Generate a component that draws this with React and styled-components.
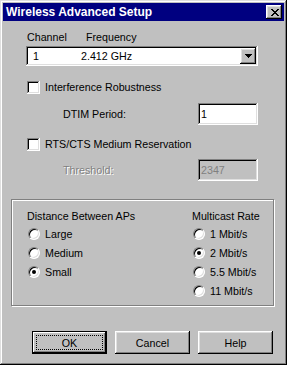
import React from "react"
import styled, { createGlobalStyle, css } from "styled-components"

// Win98 style dialog: "Wireless Advanced Setup"
const GlobalStyle = createGlobalStyle`
  html, body {
    margin: 0;
    padding: 0;
    background: #c0c0c0;
  }
  body {
    font-family: "Liberation Sans", Arial, sans-serif;
    font-size: 10.7px;
    color: #000;
  }
`

const raised = css`
  box-shadow: inset -1px -1px #000, inset 1px 1px #fff, inset -2px -2px #808080, inset 2px 2px #dfdfdf;
`

const sunken = css`
  box-shadow: inset -1px -1px #fff, inset 1px 1px #808080, inset -2px -2px #dfdfdf, inset 2px 2px #000;
`

const Window = styled.div`
  width: 287px;
  height: 365px;
  box-sizing: border-box;
  padding: 3px;
  background: #c0c0c0;
  box-shadow: inset -1px -1px #000, inset 1px 1px #dfdfdf, inset -2px -2px #808080, inset 2px 2px #fff;
  display: flex;
  flex-direction: column;
`

const TitleBar = styled.div`
  height: 18px;
  background: #000080;
  display: flex;
  align-items: center;
  justify-content: space-between;
  padding: 0 2px 0 3px;
`

const Title = styled.span`
  color: #fff;
  font-weight: bold;
  font-size: 12px;
  line-height: 18px;
`

const CloseButton = styled.button`
  width: 16px;
  height: 14px;
  padding: 0 0 0 1px;
  border: none;
  background: #c0c0c0;
  ${raised};
  display: flex;
  align-items: center;
  justify-content: center;
`

const Body = styled.div`
  padding: 0 26px 0 23px;
  display: flex;
  flex-direction: column;
`

const LabelRow = styled.div`
  margin-top: 10px;
  height: 13px;
  line-height: 13px;
  display: flex;
`

const ChannelLabel = styled.span`
  width: 60px;
  padding-left: 1px;
  box-sizing: border-box;
`

const Combo = styled.div`
  margin-top: 2px;
  height: 20px;
  box-sizing: border-box;
  padding: 2px;
  background: #fff;
  ${sunken};
  display: flex;
  align-items: center;
`

const ComboText = styled.div`
  flex: 1;
  padding-left: 5px;
  display: flex;
  line-height: 16px;
`

const ComboChannel = styled.span`
  width: 48px;
`

const DropButton = styled.div`
  width: 16px;
  height: 16px;
  background: #c0c0c0;
  ${raised};
  display: flex;
  align-items: center;
  justify-content: center;
`

const CheckRow = styled.label`
  margin-top: ${(p) => p.$top}px;
  height: 13px;
  padding-left: 1px;
  display: flex;
  align-items: center;
  gap: 5px;
  line-height: 13px;
`

const CheckBox = styled.span`
  width: 13px;
  height: 13px;
  flex: none;
  background: #fff;
  ${sunken};
`

const FieldRow = styled.div`
  margin-top: ${(p) => p.$top}px;
  height: 22px;
  padding-left: 37px;
  display: flex;
  align-items: center;
`

const FieldLabel = styled.span`
  color: ${(p) => (p.$disabled ? "#808080" : "#000")};
  text-shadow: ${(p) => (p.$disabled ? "1px 1px 0 #fff" : "none")};
`

const TextField = styled.div`
  margin-left: auto;
  width: 60px;
  height: 22px;
  box-sizing: border-box;
  padding: 2px 2px 2px 3px;
  line-height: 18px;
  background: ${(p) => (p.$disabled ? "#c0c0c0" : "#fff")};
  color: ${(p) => (p.$disabled ? "#808080" : "#000")};
  ${sunken};
`

const GroupBox = styled.div`
  margin: 18px 0 0 -15px;
  width: 263px;
  height: 107px;
  box-sizing: border-box;
  border: 1px solid #808080;
  box-shadow: inset 1px 1px #fff, 1px 1px #fff;
  padding: 10px 0 0 15px;
  display: grid;
  grid-template-columns: 165px 1fr;
`

const GroupColumn = styled.div`
  display: flex;
  flex-direction: column;
`

const GroupLabel = styled.div`
  height: 13px;
  line-height: 13px;
  margin-bottom: 1px;
`

const RadioRow = styled.label`
  height: 19px;
  padding-left: 1px;
  display: flex;
  align-items: center;
  gap: 5px;
`

const RadioDot = styled.span`
  position: relative;
  width: 12px;
  height: 12px;
  flex: none;
  box-sizing: border-box;
  border-radius: 50%;
  background: #fff;
  border: 1px solid;
  border-color: #808080 #fff #fff #808080;
  box-shadow: inset 1px 1px #000, inset -1px -1px #dfdfdf;

  &::after {
    content: "";
    display: ${(p) => (p.$checked ? "block" : "none")};
    position: absolute;
    left: 3px;
    top: 3px;
    width: 4px;
    height: 4px;
    border-radius: 50%;
    background: #000;
  }
`

const ButtonRow = styled.div`
  margin: 25px -15px 0 0;
  display: flex;
  justify-content: flex-end;
  gap: 8px;
`

const Button = styled.button`
  width: 75px;
  height: 23px;
  box-sizing: border-box;
  padding: 4px;
  border: none;
  background: #c0c0c0;
  font: inherit;
  color: #000;
  display: flex;
  ${(p) =>
    p.$default
      ? css`
          box-shadow: inset -2px -2px #000, inset 1px 1px #000, inset 2px 2px #fff, inset -3px -3px #808080;
        `
      : raised};
`

const ButtonFace = styled.span`
  flex: 1;
  display: flex;
  align-items: center;
  justify-content: center;
  border: 1px dotted ${(p) => (p.$focus ? "#000" : "transparent")};
`

function CloseIcon() {
  return (
    <svg width="8" height="7" viewBox="0 0 8 7" shapeRendering="crispEdges">
      <path
        d="M0 0h2v1H0zM6 0h2v1H6zM1 1h2v1H1zM5 1h2v1H5zM2 2h4v1H2zM3 3h2v1H3zM2 4h4v1H2zM1 5h2v1H1zM5 5h2v1H5zM0 6h2v1H0zM6 6h2v1H6z"
        fill="#000"
      />
    </svg>
  )
}

function ArrowDown() {
  return (
    <svg width="7" height="4" viewBox="0 0 7 4" shapeRendering="crispEdges">
      <path d="M0 0h7v1H0zM1 1h5v1H1zM2 2h3v1H2zM3 3h1v1H3z" fill="#000" />
    </svg>
  )
}

const distances = [
  { label: "Large" },
  { label: "Medium" },
  { label: "Small", checked: true },
]

const rates = [
  { label: "1 Mbit/s" },
  { label: "2 Mbit/s", checked: true },
  { label: "5.5 Mbit/s" },
  { label: "11 Mbit/s" },
]

export default function App() {
  return (
    <>
      <GlobalStyle />
      <Window>
        <TitleBar>
          <Title>Wireless Advanced Setup</Title>
          <CloseButton aria-label="Close">
            <CloseIcon />
          </CloseButton>
        </TitleBar>
        <Body>
          <LabelRow>
            <ChannelLabel>Channel</ChannelLabel>
            <span>Frequency</span>
          </LabelRow>
          <Combo>
            <ComboText>
              <ComboChannel>1</ComboChannel>
              <span>2.412 GHz</span>
            </ComboText>
            <DropButton>
              <ArrowDown />
            </DropButton>
          </Combo>

          <CheckRow $top={15}>
            <CheckBox />
            Interference Robustness
          </CheckRow>
          <FieldRow $top={9}>
            <FieldLabel>DTIM Period:</FieldLabel>
            <TextField>1</TextField>
          </FieldRow>

          <CheckRow $top={13}>
            <CheckBox />
            RTS/CTS Medium Reservation
          </CheckRow>
          <FieldRow $top={8}>
            <FieldLabel $disabled>Threshold:</FieldLabel>
            <TextField $disabled>2347</TextField>
          </FieldRow>

          <GroupBox>
            <GroupColumn>
              <GroupLabel>Distance Between APs</GroupLabel>
              {distances.map((d) => (
                <RadioRow key={d.label}>
                  <RadioDot $checked={d.checked} />
                  {d.label}
                </RadioRow>
              ))}
            </GroupColumn>
            <GroupColumn>
              <GroupLabel>Multicast Rate</GroupLabel>
              {rates.map((r) => (
                <RadioRow key={r.label}>
                  <RadioDot $checked={r.checked} />
                  {r.label}
                </RadioRow>
              ))}
            </GroupColumn>
          </GroupBox>

          <ButtonRow>
            <Button $default>
              <ButtonFace $focus>OK</ButtonFace>
            </Button>
            <Button>
              <ButtonFace>Cancel</ButtonFace>
            </Button>
            <Button>
              <ButtonFace>Help</ButtonFace>
            </Button>
          </ButtonRow>
        </Body>
      </Window>
    </>
  )
}
